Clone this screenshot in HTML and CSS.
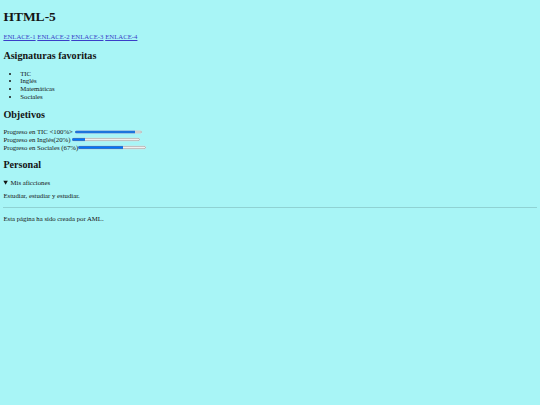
FILE: index.html
```html
<!DOCTYPE html>
<html lang="es">
<head>
<meta charset="utf-8">
<title>HTML-5</title>
<link rel="stylesheet" href="styles.css">
</head>
<body class="page">
<header>
<h1 class="title">HTML-5</h1>
<nav class="links">
<a href="#e1">ENLACE-1</a>
<a href="#e2">ENLACE-2</a>
<a href="#e3">ENLACE-3</a>
<a href="#e4">ENLACE-4</a>
</nav>
</header>
<section>
<h2 class="sub">Asignaturas favoritas</h2>
<ul class="list">
<li>TIC</li>
<li>Inglés</li>
<li>Matemáticas</li>
<li>Sociales</li>
</ul>
</section>
<section>
<h2 class="sub sub-goals">Objetivos</h2>
<div class="goal">Progreso en TIC &lt;100%&gt; <progress class="bar" value="90" max="100"></progress></div>
<div class="goal">Progreso en Inglés(20%) <progress class="bar" value="20" max="100"></progress></div>
<div class="goal">Progreso en Sociales (67%)<progress class="bar" value="67" max="100"></progress></div>
</section>
<section>
<h2 class="sub sub-personal">Personal</h2>
<details class="hobbies" open>
<summary>Mis aficciones</summary>
<p>Estudiar, estudiar y estudiar.</p>
</details>
</section>
<hr class="rule">
<footer>
<p>Esta página ha sido creada por AML.</p>
</footer>
</body>
</html>
```
FILE: styles.css
```css
html {
  background: #a8f5f6;
}
.page {
  margin: 3.375px;
  font-family: "Liberation Serif", "Times New Roman", serif;
  font-size: 6.75px;
  line-height: 7.76px;
  color: #141414;
}
.title {
  font-size: 13.5px;
  line-height: 15.53px;
  margin: 5.5px 0 9.045px;
}
.links {
  margin: 0;
}
.links a {
  color: #3a3ec8;
}
.sub {
  font-size: 10.125px;
  line-height: 11.64px;
  margin: 8.4px 0;
}
.sub-goals {
  margin-bottom: 7.4px;
}
.sub-personal {
  margin-top: 7.4px;
}
.list {
  margin: 6.75px 0;
  padding-left: 16.875px;
}
.bar {
  width: 67.5px;
  height: 6.75px;
}
.hobbies p {
  margin: 5.75px 0 6.75px;
}
.rule {
  margin: 3.375px 0;
  height: 0;
  border: 0;
  border-top: 1px solid #8fd2d3;
}
footer p {
  margin: 6.75px 0;
}
```
